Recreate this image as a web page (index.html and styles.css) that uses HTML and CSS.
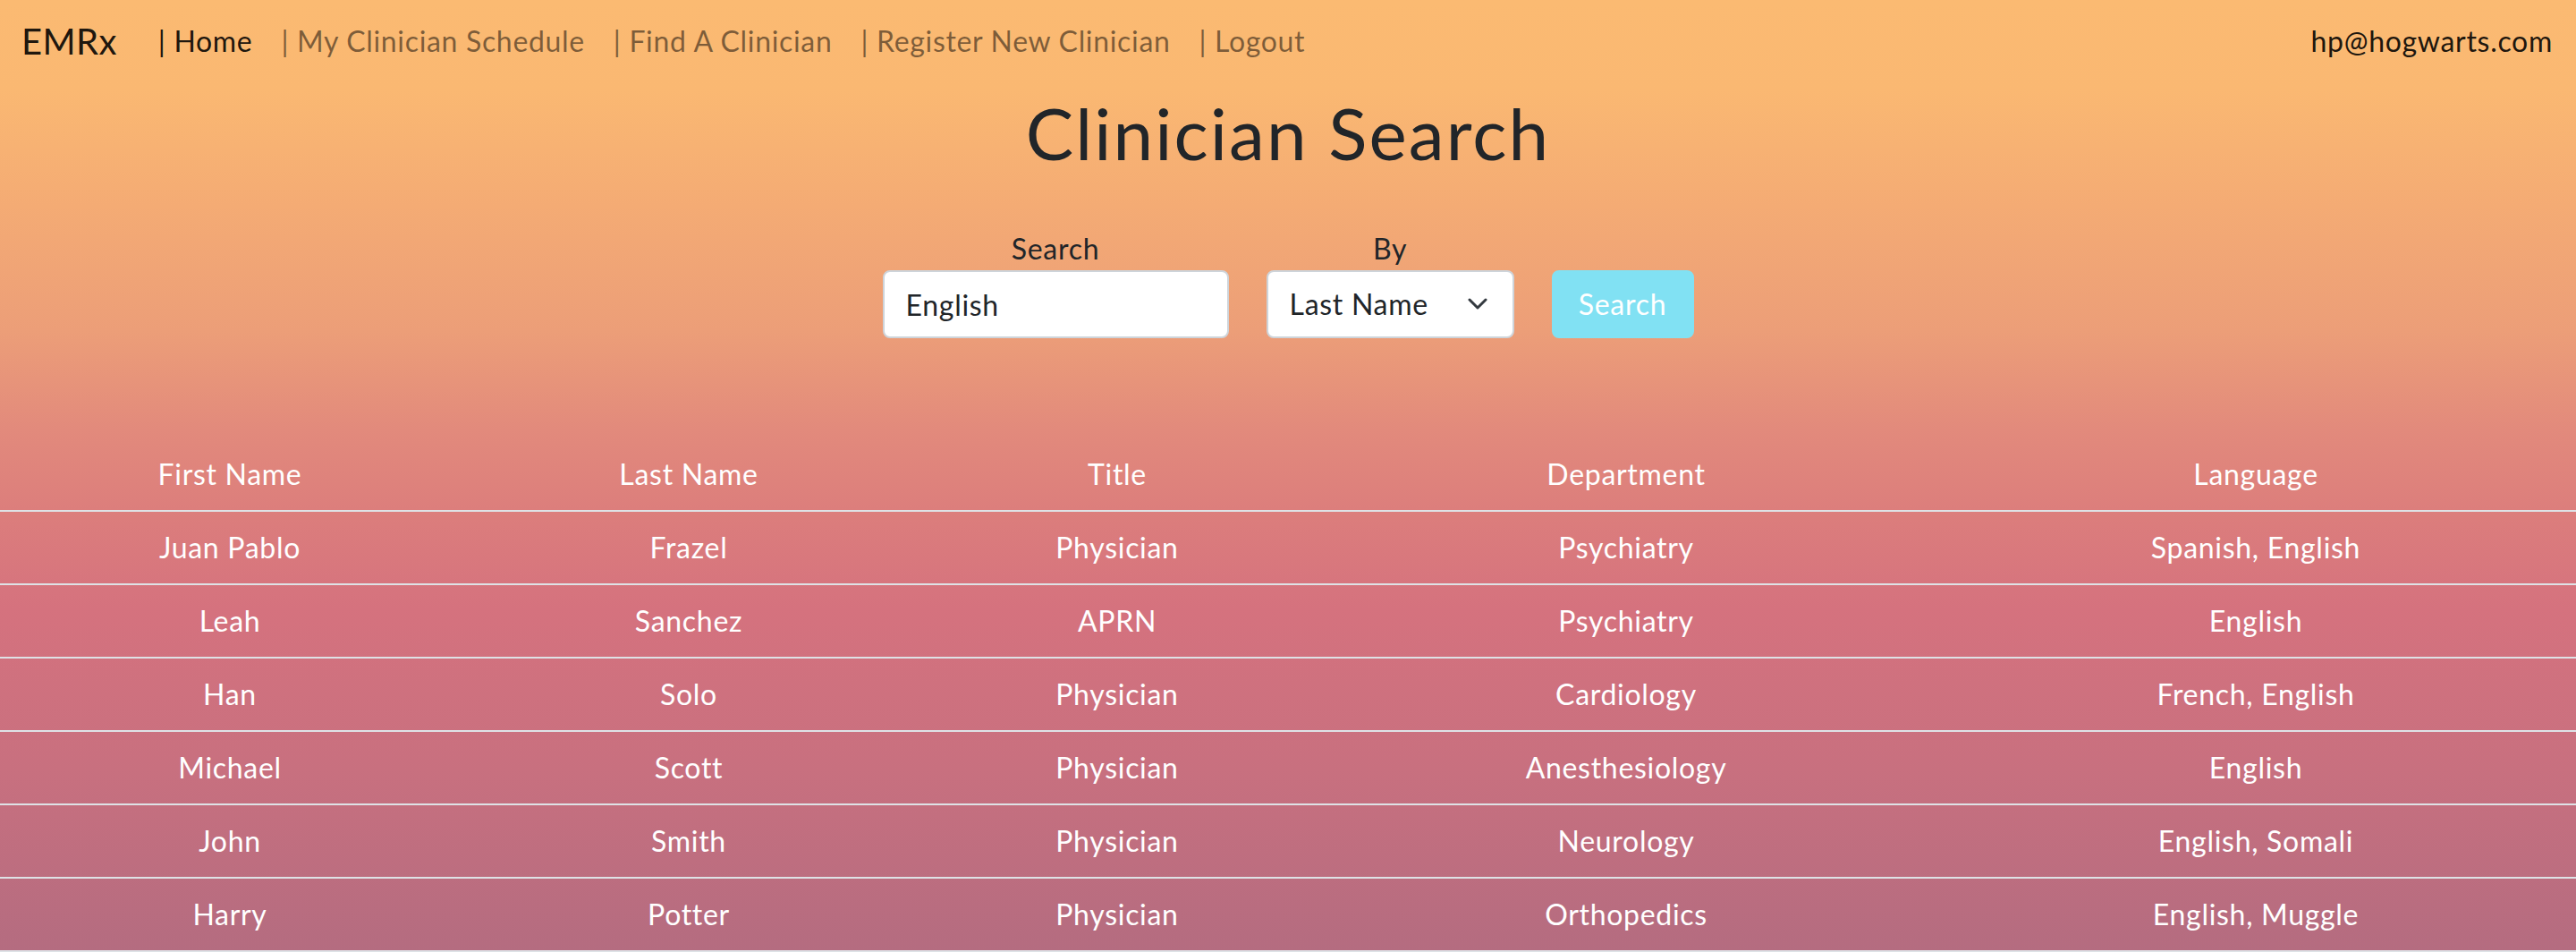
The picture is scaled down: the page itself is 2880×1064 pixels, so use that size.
FILE: index.html
```html
<!DOCTYPE html>
<html lang="en">
<head>
<meta charset="utf-8">
<title>EMRx - Clinician Search</title>
<link rel="stylesheet" href="styles.css">
</head>
<body>
<nav class="navbar">
  <a class="brand" href="#">EMRx</a>
  <ul class="nav-links">
    <li><a class="nav-link active" href="#">| Home</a></li>
    <li><a class="nav-link" href="#">| My Clinician Schedule</a></li>
    <li><a class="nav-link" href="#">| Find A Clinician</a></li>
    <li><a class="nav-link" href="#">| Register New Clinician</a></li>
    <li><a class="nav-link" href="#">| Logout</a></li>
  </ul>
  <span class="user">hp@hogwarts.com</span>
</nav>
<main>
  <h1 class="title">Clinician Search</h1>
  <form class="search-form">
    <div class="field">
      <label class="field-label" for="q">Search</label>
      <input class="text-input" id="q" type="text" value="English">
    </div>
    <div class="field">
      <label class="field-label" for="by">By</label>
      <div class="select-wrap">
        <select class="select-input" id="by">
          <option>Last Name</option>
          <option>First Name</option>
          <option>Title</option>
          <option>Department</option>
          <option>Language</option>
        </select>
        <svg class="chevron" width="22" height="14" viewBox="0 0 22 14"><path d="M2 2 L11 11 L20 2" fill="none" stroke="#343a40" stroke-width="3" stroke-linecap="round" stroke-linejoin="round"/></svg>
      </div>
    </div>
    <div class="field">
      <button class="btn-search" type="button" disabled>Search</button>
    </div>
  </form>
  <table class="results">
    <colgroup>
      <col class="c1"><col class="c2"><col class="c3"><col class="c4"><col class="c5">
    </colgroup>
    <thead>
      <tr><th>First Name</th><th>Last Name</th><th>Title</th><th>Department</th><th>Language</th></tr>
    </thead>
    <tbody>
      <tr><td>Juan Pablo</td><td>Frazel</td><td>Physician</td><td>Psychiatry</td><td>Spanish, English</td></tr>
      <tr><td>Leah</td><td>Sanchez</td><td>APRN</td><td>Psychiatry</td><td>English</td></tr>
      <tr><td>Han</td><td>Solo</td><td>Physician</td><td>Cardiology</td><td>French, English</td></tr>
      <tr><td>Michael</td><td>Scott</td><td>Physician</td><td>Anesthesiology</td><td>English</td></tr>
      <tr><td>John</td><td>Smith</td><td>Physician</td><td>Neurology</td><td>English, Somali</td></tr>
      <tr><td>Harry</td><td>Potter</td><td>Physician</td><td>Orthopedics</td><td>English, Muggle</td></tr>
    </tbody>
  </table>
</main>
</body>
</html>
```
FILE: styles.css
```css
html {
  background: linear-gradient(180deg,
    #fbba72 0px,
    #fab872 100px,
    #f4ab74 230px,
    #ec9e78 370px,
    #e28a7c 480px,
    #dc7e7c 570px,
    #d5727e 680px,
    #c8707f 860px,
    #b46c80 1064px) no-repeat;
  background-color: #b46c80;
  min-height: 100%;
}

body {
  margin: 0;
  font-family: "Lato", "Liberation Sans", sans-serif;
  font-size: 32px;
  line-height: 1.5;
  letter-spacing: 0.022em;
  color: #212529;
}

.navbar {
  display: flex;
  align-items: center;
  height: 92px;
  padding: 0 26px 0 24px;
}

.brand {
  font-size: 40px;
  letter-spacing: 0.01em;
  color: rgba(0, 0, 0, 0.9);
  text-decoration: none;
  margin-right: 30px;
}

.nav-links {
  display: flex;
  list-style: none;
  margin: 0;
  padding: 0;
}

.nav-link {
  display: block;
  padding: 0 16px;
  letter-spacing: 0.021em;
  color: rgba(0, 0, 0, 0.5);
  text-decoration: none;
}

.nav-link.active {
  color: rgba(0, 0, 0, 0.9);
}

.user {
  margin-left: auto;
  color: rgba(0, 0, 0, 0.9);
}

.title {
  margin: 8px 0 58px;
  text-align: center;
  font-size: 80px;
  font-weight: 400;
  line-height: 1.2;
  letter-spacing: 0.026em;
  color: #212529;
}

.search-form {
  display: flex;
  justify-content: center;
  align-items: flex-end;
  gap: 42px;
}

.field {
  display: flex;
  flex-direction: column;
  align-items: center;
}

.field-label {
  display: block;
}

.text-input,
.select-input,
.btn-search {
  font-family: inherit;
  font-size: 32px;
  line-height: 1.5;
  letter-spacing: inherit;
  height: 76px;
  box-sizing: border-box;
  border-radius: 8px;
}

.text-input {
  width: 387px;
  padding: 0 24px;
  border: 2px solid #ced4da;
  background: #fff;
  color: #212529;
  outline: none;
}

.select-wrap {
  position: relative;
}

.select-input {
  -webkit-appearance: none;
  appearance: none;
  width: 277px;
  padding: 0 70px 0 24px;
  border: 2px solid #ced4da;
  background: #fff;
  color: #212529;
  outline: none;
}

.chevron {
  position: absolute;
  right: 30px;
  top: 31px;
  pointer-events: none;
}

.btn-search {
  width: 159px;
  padding: 0 20px;
  border: 2px solid #81e1f3;
  background: #81e1f3;
  color: #fff;
}

.results {
  width: 100%;
  margin-top: 112px;
  border-collapse: collapse;
  table-layout: fixed;
  color: #fff;
}

.c1 { width: 514px; }
.c2 { width: 512px; }
.c3 { width: 446px; }
.c4 { width: 692px; }
.c5 { width: 716px; }

.results th,
.results td {
  padding: 16px;
  text-align: center;
  font-weight: 400;
  line-height: 48px;
  border-bottom: 2px solid #dee2e6;
}
```
